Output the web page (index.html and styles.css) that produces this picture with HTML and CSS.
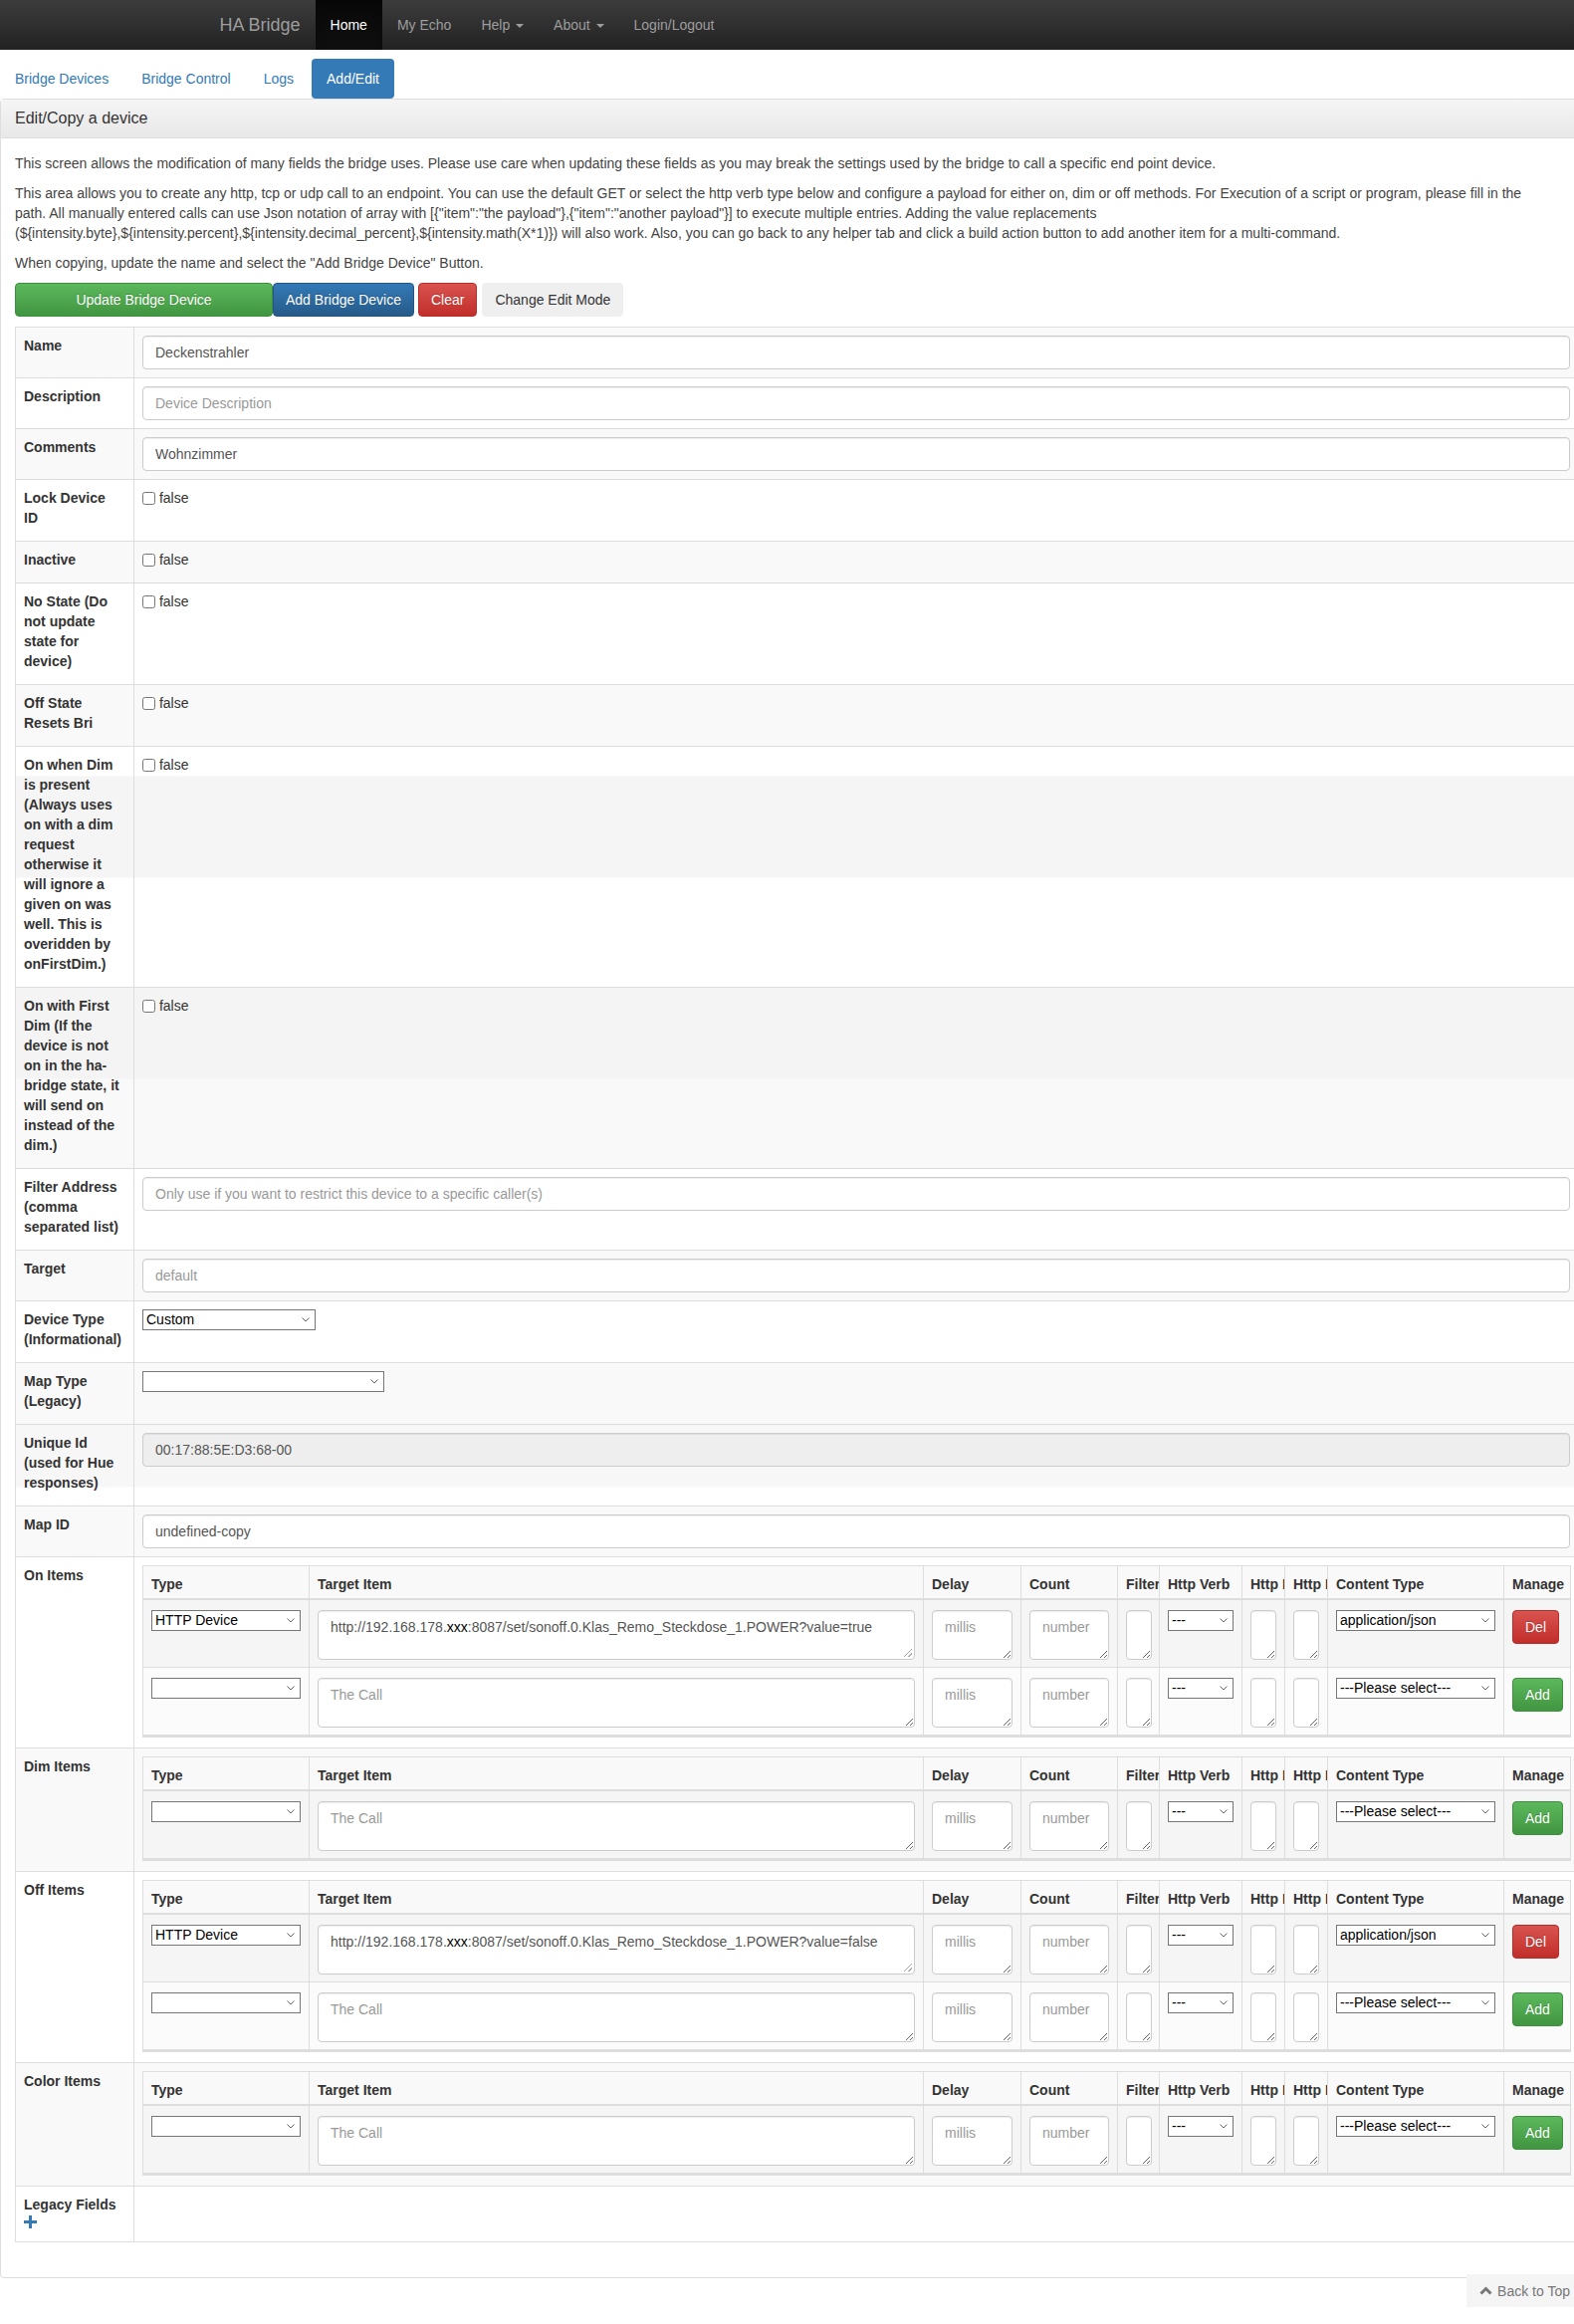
FILE: index.html
```html
<!DOCTYPE html>
<html lang="en">
  <head>
    <meta charset="UTF-8" />
    <meta name="viewport" content="width=device-width, initial-scale=1.0" />
    <title>HA Bridge</title>
    <link rel="stylesheet" href="styles.css">
  </head>
  <body>
    <nav class="navbar">
      <div class="navbar-inner">
        <a class="brand" href="#">HA Bridge</a>
        <ul class="navbar-nav">
          <li class="active"><a href="#">Home</a></li>
          <li><a href="#">My Echo</a></li>
          <li><a href="#">Help <span class="caret"></span></a></li>
          <li><a href="#">About <span class="caret"></span></a></li>
          <li><a href="#">Login/Logout</a></li>
        </ul>
      </div>
    </nav>

    <ul class="nav-pills">
      <li><a href="#">Bridge Devices</a></li>
      <li><a href="#">Bridge Control</a></li>
      <li><a href="#">Logs</a></li>
      <li class="active"><a href="#">Add/Edit</a></li>
    </ul>

    <div class="panel">
      <div class="panel-heading">
        <h3 class="panel-title">Edit/Copy a device</h3>
      </div>
      <div class="panel-body">
        <div class="intro">
          <p>This screen allows the modification of many fields the bridge uses. Please use care when updating these fields as you may break the settings used by the bridge to call a specific end point device.</p>
          <p>This area allows you to create any http, tcp or udp call to an endpoint. You can use the default GET or select the http verb type below and configure a payload for either on, dim or off methods. For Execution of a script or program, please fill in the path. All manually entered calls can use Json notation of array with [{"item":"the payload"},{"item":"another payload"}] to execute multiple entries. Adding the value replacements (${intensity.byte},${intensity.percent},${intensity.decimal_percent},${intensity.math(X*1)}) will also work. Also, you can go back to any helper tab and click a build action button to add another item for a multi-command.</p>
          <p>When copying, update the name and select the "Add Bridge Device" Button.</p>
        </div>

        <div class="actions">
          <button class="btn btn-success btn-wide">Update Bridge Device</button>
          <button class="btn btn-primary">Add Bridge Device</button>
          <button class="btn btn-danger btn-gap">Clear</button>
          <button class="btn btn-plain btn-gap2">Change Edit Mode</button>
        </div>

        <table class="device-table">
          <colgroup>
            <col class="label-col">
            <col>
          </colgroup>
          <tbody>
            <tr>
              <th><label class="field-label">Name</label></th>
              <td><input class="form-control" type="text" value="Deckenstrahler"></td>
            </tr>
            <tr>
              <th><label class="field-label">Description</label></th>
              <td><input class="form-control" type="text" placeholder="Device Description"></td>
            </tr>
            <tr>
              <th><label class="field-label">Comments</label></th>
              <td><input class="form-control" type="text" value="Wohnzimmer"></td>
            </tr>
            <tr>
              <th><label class="field-label">Lock Device ID</label></th>
              <td><input class="check" type="checkbox"> false</td>
            </tr>
            <tr>
              <th><label class="field-label">Inactive</label></th>
              <td><input class="check" type="checkbox"> false</td>
            </tr>
            <tr>
              <th><label class="field-label">No State (Do not update state for device)</label></th>
              <td><input class="check" type="checkbox"> false</td>
            </tr>
            <tr>
              <th><label class="field-label">Off State Resets Bri</label></th>
              <td><input class="check" type="checkbox"> false</td>
            </tr>
            <tr class="band-dim">
              <th><label class="field-label">On when Dim is present (Always uses on with a dim request otherwise it will ignore a given on was well. This is overidden by onFirstDim.)</label></th>
              <td><input class="check" type="checkbox"> false</td>
            </tr>
            <tr class="band-first">
              <th><label class="field-label">On with First Dim (If the device is not on in the ha-bridge state, it will send on instead of the dim.)</label></th>
              <td><input class="check" type="checkbox"> false</td>
            </tr>
            <tr>
              <th><label class="field-label">Filter Address (comma separated list)</label></th>
              <td><input class="form-control" type="text" placeholder="Only use if you want to restrict this device to a specific caller(s)"></td>
            </tr>
            <tr>
              <th><label class="field-label">Target</label></th>
              <td><input class="form-control" type="text" placeholder="default"></td>
            </tr>
            <tr>
              <th><label class="field-label">Device Type (Informational)</label></th>
              <td><select class="plain-select w-device"><option>Custom</option></select></td>
            </tr>
            <tr>
              <th><label class="field-label">Map Type (Legacy)</label></th>
              <td><select class="plain-select w-map"><option></option></select></td>
            </tr>
            <tr class="band-unique">
              <th><label class="field-label">Unique Id (used for Hue responses)</label></th>
              <td><input class="form-control" type="text" value="00:17:88:5E:D3:68-00" readonly></td>
            </tr>
            <tr>
              <th><label class="field-label">Map ID</label></th>
              <td><input class="form-control" type="text" value="undefined-copy"></td>
            </tr>

            <tr>
              <th><label class="field-label">On Items</label></th>
              <td>
                <table class="items-table">
                  <colgroup>
                    <col class="c-type"><col class="c-target"><col class="c-delay"><col class="c-count"><col class="c-filter"><col class="c-verb"><col class="c-http"><col class="c-http"><col class="c-content"><col class="c-manage">
                  </colgroup>
                  <thead>
                    <tr><th>Type</th><th>Target Item</th><th>Delay</th><th>Count</th><th>Filter</th><th>Http Verb</th><th>Http Headers</th><th>Http Body</th><th>Content Type</th><th>Manage</th></tr>
                  </thead>
                  <tbody>
                    <tr>
                      <td><select class="plain-select full"><option>HTTP Device</option></select></td>
                      <td><div class="form-control call-box">http://192.168.178.<span class="redacted">xxx</span>:8087/set/sonoff.0.Klas_Remo_Steckdose_1.POWER?value=true</div></td>
                      <td><textarea class="form-control area" placeholder="millis"></textarea></td>
                      <td><textarea class="form-control area" placeholder="number"></textarea></td>
                      <td><textarea class="form-control area"></textarea></td>
                      <td><select class="plain-select full"><option>---</option></select></td>
                      <td><textarea class="form-control area"></textarea></td>
                      <td><textarea class="form-control area"></textarea></td>
                      <td><select class="plain-select full"><option>application/json</option></select></td>
                      <td><button class="btn btn-danger">Del</button></td>
                    </tr>
                    <tr>
                      <td><select class="plain-select full"><option></option></select></td>
                      <td><textarea class="form-control area" placeholder="The Call"></textarea></td>
                      <td><textarea class="form-control area" placeholder="millis"></textarea></td>
                      <td><textarea class="form-control area" placeholder="number"></textarea></td>
                      <td><textarea class="form-control area"></textarea></td>
                      <td><select class="plain-select full"><option>---</option></select></td>
                      <td><textarea class="form-control area"></textarea></td>
                      <td><textarea class="form-control area"></textarea></td>
                      <td><select class="plain-select full"><option>---Please select---</option></select></td>
                      <td><button class="btn btn-success">Add</button></td>
                    </tr>
                  </tbody>
                </table>
              </td>
            </tr>

            <tr>
              <th><label class="field-label">Dim Items</label></th>
              <td>
                <table class="items-table">
                  <colgroup>
                    <col class="c-type"><col class="c-target"><col class="c-delay"><col class="c-count"><col class="c-filter"><col class="c-verb"><col class="c-http"><col class="c-http"><col class="c-content"><col class="c-manage">
                  </colgroup>
                  <thead>
                    <tr><th>Type</th><th>Target Item</th><th>Delay</th><th>Count</th><th>Filter</th><th>Http Verb</th><th>Http Headers</th><th>Http Body</th><th>Content Type</th><th>Manage</th></tr>
                  </thead>
                  <tbody>
                    <tr>
                      <td><select class="plain-select full"><option></option></select></td>
                      <td><textarea class="form-control area" placeholder="The Call"></textarea></td>
                      <td><textarea class="form-control area" placeholder="millis"></textarea></td>
                      <td><textarea class="form-control area" placeholder="number"></textarea></td>
                      <td><textarea class="form-control area"></textarea></td>
                      <td><select class="plain-select full"><option>---</option></select></td>
                      <td><textarea class="form-control area"></textarea></td>
                      <td><textarea class="form-control area"></textarea></td>
                      <td><select class="plain-select full"><option>---Please select---</option></select></td>
                      <td><button class="btn btn-success">Add</button></td>
                    </tr>
                  </tbody>
                </table>
              </td>
            </tr>

            <tr>
              <th><label class="field-label">Off Items</label></th>
              <td>
                <table class="items-table">
                  <colgroup>
                    <col class="c-type"><col class="c-target"><col class="c-delay"><col class="c-count"><col class="c-filter"><col class="c-verb"><col class="c-http"><col class="c-http"><col class="c-content"><col class="c-manage">
                  </colgroup>
                  <thead>
                    <tr><th>Type</th><th>Target Item</th><th>Delay</th><th>Count</th><th>Filter</th><th>Http Verb</th><th>Http Headers</th><th>Http Body</th><th>Content Type</th><th>Manage</th></tr>
                  </thead>
                  <tbody>
                    <tr>
                      <td><select class="plain-select full"><option>HTTP Device</option></select></td>
                      <td><div class="form-control call-box">http://192.168.178.<span class="redacted">xxx</span>:8087/set/sonoff.0.Klas_Remo_Steckdose_1.POWER?value=false</div></td>
                      <td><textarea class="form-control area" placeholder="millis"></textarea></td>
                      <td><textarea class="form-control area" placeholder="number"></textarea></td>
                      <td><textarea class="form-control area"></textarea></td>
                      <td><select class="plain-select full"><option>---</option></select></td>
                      <td><textarea class="form-control area"></textarea></td>
                      <td><textarea class="form-control area"></textarea></td>
                      <td><select class="plain-select full"><option>application/json</option></select></td>
                      <td><button class="btn btn-danger">Del</button></td>
                    </tr>
                    <tr>
                      <td><select class="plain-select full"><option></option></select></td>
                      <td><textarea class="form-control area" placeholder="The Call"></textarea></td>
                      <td><textarea class="form-control area" placeholder="millis"></textarea></td>
                      <td><textarea class="form-control area" placeholder="number"></textarea></td>
                      <td><textarea class="form-control area"></textarea></td>
                      <td><select class="plain-select full"><option>---</option></select></td>
                      <td><textarea class="form-control area"></textarea></td>
                      <td><textarea class="form-control area"></textarea></td>
                      <td><select class="plain-select full"><option>---Please select---</option></select></td>
                      <td><button class="btn btn-success">Add</button></td>
                    </tr>
                  </tbody>
                </table>
              </td>
            </tr>

            <tr>
              <th><label class="field-label">Color Items</label></th>
              <td>
                <table class="items-table">
                  <colgroup>
                    <col class="c-type"><col class="c-target"><col class="c-delay"><col class="c-count"><col class="c-filter"><col class="c-verb"><col class="c-http"><col class="c-http"><col class="c-content"><col class="c-manage">
                  </colgroup>
                  <thead>
                    <tr><th>Type</th><th>Target Item</th><th>Delay</th><th>Count</th><th>Filter</th><th>Http Verb</th><th>Http Headers</th><th>Http Body</th><th>Content Type</th><th>Manage</th></tr>
                  </thead>
                  <tbody>
                    <tr>
                      <td><select class="plain-select full"><option></option></select></td>
                      <td><textarea class="form-control area" placeholder="The Call"></textarea></td>
                      <td><textarea class="form-control area" placeholder="millis"></textarea></td>
                      <td><textarea class="form-control area" placeholder="number"></textarea></td>
                      <td><textarea class="form-control area"></textarea></td>
                      <td><select class="plain-select full"><option>---</option></select></td>
                      <td><textarea class="form-control area"></textarea></td>
                      <td><textarea class="form-control area"></textarea></td>
                      <td><select class="plain-select full"><option>---Please select---</option></select></td>
                      <td><button class="btn btn-success">Add</button></td>
                    </tr>
                  </tbody>
                </table>
              </td>
            </tr>

            <tr>
              <th>
                <label class="field-label">Legacy Fields<br>
                  <svg class="plus-icon" width="13" height="13" viewBox="0 0 13 13"><rect x="5" y="0" width="3" height="13" fill="#337ab7"/><rect x="0" y="5" width="13" height="3" fill="#337ab7"/></svg>
                </label>
              </th>
              <td></td>
            </tr>
          </tbody>
        </table>
      </div>
    </div>

    <a class="back-top" href="#">
      <svg width="13" height="9" viewBox="0 0 13 9"><polyline points="1.5,7.5 6.5,2.5 11.5,7.5" fill="none" stroke="#777" stroke-width="3"/></svg>
      Back to Top
    </a>
  </body>
</html>
```

FILE: styles.css
```css
* {
  box-sizing: border-box;
}
html,
body {
  margin: 0;
  padding: 0;
}
body {
  font-family: "Liberation Sans", Arial, sans-serif;
  font-size: 14px;
  line-height: 20px;
  color: #333;
  background-color: #fff;
  overflow-x: hidden;
}
a {
  text-decoration: none;
}

/* top bar */
.navbar {
  height: 50px;
  background: linear-gradient(to bottom, #3c3c3c 0, #222 100%);
}
.navbar-inner {
  display: flex;
  width: 1170px;
  margin: 0 auto;
}
.brand {
  padding: 15px;
  font-size: 18px;
  line-height: 20px;
  color: #9d9d9d;
}
.navbar-nav {
  display: flex;
  list-style: none;
  margin: 0;
  padding: 0;
}
.navbar-nav a {
  display: block;
  padding: 15px;
  color: #9d9d9d;
}
.navbar-nav .active a {
  color: #fff;
  background: linear-gradient(to bottom, #080808 0, #0f0f0f 100%);
  box-shadow: inset 0 3px 9px rgba(0, 0, 0, 0.25);
}
.caret {
  display: inline-block;
  width: 0;
  height: 0;
  margin-left: 2px;
  vertical-align: middle;
  border-top: 4px solid;
  border-left: 4px solid transparent;
  border-right: 4px solid transparent;
}

/* tabs */
.nav-pills {
  display: flex;
  list-style: none;
  margin: 9px 0 0;
  padding: 0;
}
.nav-pills li + li {
  margin-left: 3px;
}
.nav-pills a {
  display: block;
  padding: 10px 15px;
  color: #337ab7;
  border-radius: 4px;
}
.nav-pills .active a {
  color: #fff;
  background-color: #337ab7;
}

/* panel */
.panel {
  width: 1602px;
  border: 1px solid #ddd;
  border-radius: 4px;
}
.panel-heading {
  padding: 10px 14px;
  background: linear-gradient(to bottom, #f5f5f5 0, #e8e8e8 100%);
  border-bottom: 1px solid #ddd;
}
.panel-title {
  margin: 0;
  font-size: 16px;
  line-height: 17.6px;
  font-weight: normal;
  color: #333;
}
.panel-body {
  padding: 15px 15px 15px 14px;
}
.intro {
  max-width: 1532px;
  color: #444;
}
.intro p {
  margin: 0 0 10px;
}

/* buttons */
.actions {
  display: flex;
  margin-bottom: 10px;
}
.btn {
  display: inline-block;
  height: 34px;
  padding: 6px 12px;
  font-family: inherit;
  font-size: 14px;
  line-height: 20px;
  text-align: center;
  white-space: nowrap;
  border: 1px solid transparent;
  border-radius: 4px;
  cursor: pointer;
}
.btn-success {
  color: #fff;
  background: linear-gradient(to bottom, #5cb85c 0, #419641 100%);
  border-color: #3e8f3e;
  text-shadow: 0 -1px 0 rgba(0, 0, 0, 0.2);
}
.btn-primary {
  color: #fff;
  background: linear-gradient(to bottom, #337ab7 0, #265a88 100%);
  border-color: #245580;
  text-shadow: 0 -1px 0 rgba(0, 0, 0, 0.2);
}
.btn-danger {
  color: #fff;
  background: linear-gradient(to bottom, #d9534f 0, #c12e2a 100%);
  border-color: #b92c28;
  text-shadow: 0 -1px 0 rgba(0, 0, 0, 0.2);
}
.btn-plain {
  color: #333;
  background-color: #efefef;
  border-color: #efefef;
}
.btn-wide {
  width: 259px;
}
.btn-gap {
  margin-left: 4px;
}
.btn-gap2 {
  margin-left: 5px;
}

/* device form table */
.device-table {
  width: 1571px;
  table-layout: fixed;
  border-collapse: collapse;
  border: 1px solid #ddd;
  margin-bottom: 20px;
}
.label-col {
  width: 119px;
}
.device-table > tbody > tr > th,
.device-table > tbody > tr > td {
  padding: 8px;
  vertical-align: top;
  text-align: left;
  border: 1px solid #ddd;
}
.device-table > tbody > tr:nth-child(odd) > th,
.device-table > tbody > tr:nth-child(odd) > td {
  background-color: #f9f9f9;
}
/* uneven shading bands seen in the captured rows */
.device-table > tbody > tr.band-dim > th,
.device-table > tbody > tr.band-dim > td {
  background-image: linear-gradient(to bottom, #fff 0, #fff 30px, #f5f5f5 30px, #f5f5f5 132px, #fff 132px);
}
.device-table > tbody > tr.band-first > th,
.device-table > tbody > tr.band-first > td {
  background-image: linear-gradient(to bottom, #f4f4f4 0, #f4f4f4 92px, #f9f9f9 92px);
}
.device-table > tbody > tr.band-unique > th,
.device-table > tbody > tr.band-unique > td {
  background-image: linear-gradient(to bottom, #f7f7f7 0, #f7f7f7 63px, #fff 63px);
}
.field-label {
  display: block;
  max-width: 97.5px;
  margin-bottom: 5px;
  font-weight: bold;
  color: #333;
}
.plus-icon {
  display: block;
  margin-top: 1px;
}

.form-control {
  display: block;
  width: 100%;
  height: 34px;
  padding: 6px 12px;
  font-family: inherit;
  font-size: 14px;
  line-height: 20px;
  color: #555;
  background-color: #fff;
  border: 1px solid #ccc;
  border-radius: 4px;
  box-shadow: inset 0 1px 1px rgba(0, 0, 0, 0.075);
}
.form-control::placeholder {
  color: #999;
}
.form-control[readonly] {
  background-color: #eee;
}
.check {
  width: 13px;
  height: 13px;
  margin: 4px 0 0;
  vertical-align: top;
}

.plain-select {
  appearance: none;
  -webkit-appearance: none;
  height: 21px;
  padding: 0 18px 0 3px;
  font-family: "Liberation Sans", Arial, sans-serif;
  font-size: 14px;
  color: #000;
  background-color: #fff;
  background-image: url("data:image/svg+xml,%3Csvg xmlns='http://www.w3.org/2000/svg' width='8' height='5' viewBox='0 0 8 5'%3E%3Cpath d='M0.5 0.5L4 4L7.5 0.5' fill='none' stroke='%23666' stroke-width='1'/%3E%3C/svg%3E");
  background-repeat: no-repeat;
  background-position: right 5px center;
  border: 1px solid #767676;
  border-radius: 0;
}
.w-device {
  width: 174px;
}
.w-map {
  width: 243px;
}
.full {
  display: block;
  width: 100%;
}

/* nested item tables */
.items-table {
  width: 100%;
  margin-bottom: 2px;
  table-layout: fixed;
  border-collapse: collapse;
  border: 1px solid #ddd;
  border-bottom: 3px solid #ddd;
}
.c-type { width: 167px; }
.c-target { width: 617px; }
.c-delay { width: 98px; }
.c-count { width: 97px; }
.c-filter { width: 42px; }
.c-verb { width: 83px; }
.c-http { width: 43px; }
.c-content { width: 177px; }
.c-manage { width: 67px; }
.items-table th {
  padding: 8px 8px 4px;
  text-align: left;
  font-weight: bold;
  white-space: nowrap;
  overflow: hidden;
  background-color: #f9f9f9;
  border: 1px solid #ddd;
  border-bottom: 2px solid #ddd;
}
.items-table td {
  padding: 10px 8px 7px;
  vertical-align: top;
  border: 1px solid #ddd;
}
.items-table tbody tr:nth-child(odd) td {
  background-color: #f5f5f5;
}
.items-table tbody tr:nth-child(even) td {
  background-color: #fbfbfb;
}
.area {
  height: 50px;
  resize: vertical;
}
.call-box {
  position: relative;
  height: 50px;
  white-space: nowrap;
  overflow: hidden;
}
.call-box::after {
  content: "";
  position: absolute;
  right: 2px;
  bottom: 2px;
  width: 8px;
  height: 8px;
  background: linear-gradient(135deg, transparent 45%, #aaa 45%, #aaa 55%, transparent 55%, transparent 72%, #aaa 72%, #aaa 82%, transparent 82%);
}
.redacted {
  color: #000;
}

/* floating link */
.back-top {
  position: fixed;
  right: 0;
  bottom: 17px;
  display: flex;
  align-items: center;
  gap: 5px;
  height: 33px;
  padding: 0 4px 0 13px;
  color: #777;
  background-color: #f5f5f5;
}
```
